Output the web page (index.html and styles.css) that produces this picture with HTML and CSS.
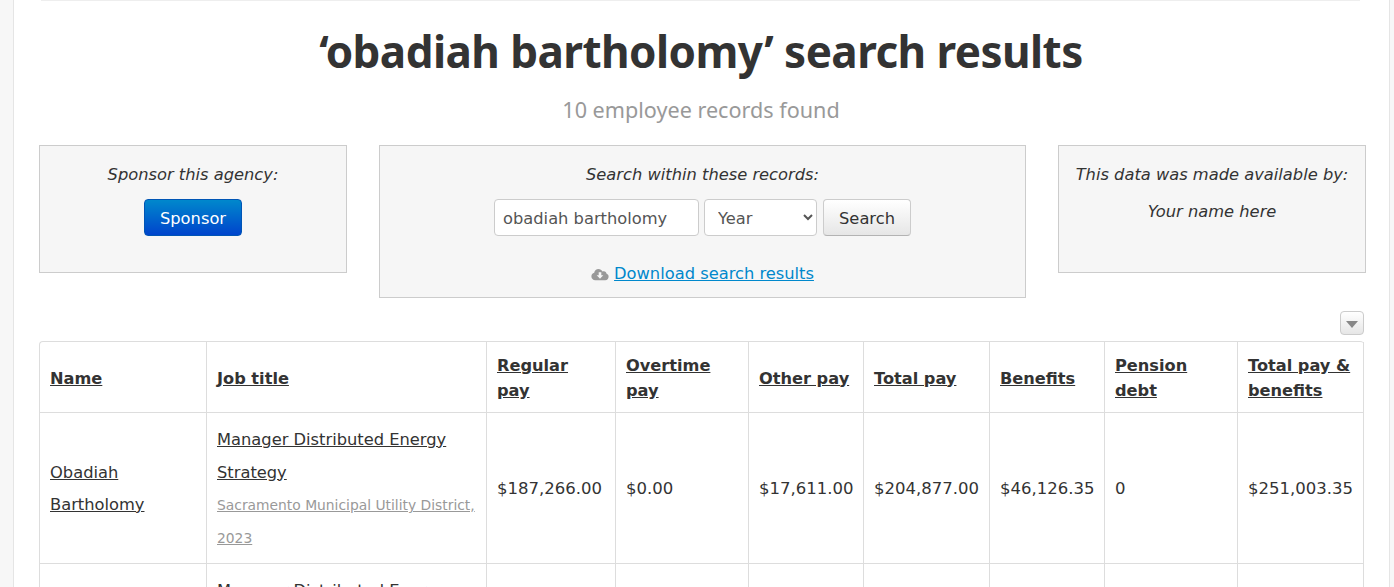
FILE: index.html
```html
<!DOCTYPE html>
<html lang="en">
<head>
    <meta charset="UTF-8">
    <meta name="viewport" content="width=device-width, initial-scale=1.0">
    <title>'obadiah bartholomy' search results</title>
    <link rel="stylesheet" href="styles.css">
</head>
<body>
    <div class="page">
        <div class="top-rule"></div>
        <h1 class="page-title">‘obadiah bartholomy’ search results</h1>
        <p class="page-subtitle">10 employee records found</p>

        <div class="panels">
            <div class="panel panel-side">
                <p class="panel-label">Sponsor this agency:</p>
                <a class="btn btn-primary" href="#">Sponsor</a>
            </div>

            <div class="panel panel-search">
                <p class="panel-label">Search within these records:</p>
                <form class="search-form">
                    <input class="search-input" type="text" value="obadiah bartholomy">
                    <select class="search-select">
                        <option>Year</option>
                    </select>
                    <button class="btn btn-default" type="button">Search</button>
                </form>
                <p class="download">
                    <svg class="download-icon" viewBox="0 2 18 11.7" width="18" height="13">
                        <path fill="#999" d="M4.3 13.5C2 13.5 .4 11.8 .4 9.8c0-1.8 1.2-3.2 2.8-3.6C3.5 3.900 5.400 2.300 7.500 2.300c1.700 0 3.200 1 4 2.500 .4-.2.800-.3 1.300-.3 1.500 0 2.700 1.200 2.800 2.700 1.200.4 2 1.500 2 2.800 0 1.900-1.400 3.500-3.300 3.500z"/>
                        <path fill="#f6f6f6" d="M7.700 5.500h2.600v3h2l-3.300 3.600-3.300-3.600h2z"/>
                    </svg>
                    <a href="#">Download search results</a>
                </p>
            </div>

            <div class="panel panel-side">
                <p class="panel-label">This data was made available by:</p>
                <p class="panel-label panel-name">Your name here</p>
            </div>
        </div>

        <div class="table-tools">
            <button class="tools-toggle" type="button"><span class="caret"></span></button>
        </div>

        <table class="records">
            <thead>
                <tr>
                    <th class="col-name"><a href="#">Name</a></th>
                    <th class="col-job"><a href="#">Job title</a></th>
                    <th class="col-regular"><a href="#">Regular pay</a></th>
                    <th class="col-overtime"><a href="#">Overtime pay</a></th>
                    <th class="col-other"><a href="#">Other pay</a></th>
                    <th class="col-total"><a href="#">Total pay</a></th>
                    <th class="col-benefits"><a href="#">Benefits</a></th>
                    <th class="col-pension"><a href="#">Pension debt</a></th>
                    <th class="col-all"><a href="#">Total pay &amp; benefits</a></th>
                </tr>
            </thead>
            <tbody>
                <tr>
                    <td class="cell-name"><a href="#">Obadiah Bartholomy</a></td>
                    <td>
                        <a href="#">Manager Distributed Energy Strategy</a><br>
                        <a class="agency" href="#">Sacramento Municipal Utility District, 2023</a>
                    </td>
                    <td>$187,266.00</td>
                    <td>$0.00</td>
                    <td>$17,611.00</td>
                    <td>$204,877.00</td>
                    <td>$46,126.35</td>
                    <td>0</td>
                    <td>$251,003.35</td>
                </tr>
                <tr>
                    <td class="cell-name"><a href="#">Obadiah Bartholomy</a></td>
                    <td>
                        <a href="#">Manager Distributed Energy Strategy</a><br>
                        <a class="agency" href="#">Sacramento Municipal Utility District, 2022</a>
                    </td>
                    <td>$180,122.00</td>
                    <td>$0.00</td>
                    <td>$16,204.00</td>
                    <td>$196,326.00</td>
                    <td>$44,310.12</td>
                    <td>0</td>
                    <td>$240,636.12</td>
                </tr>
            </tbody>
        </table>
    </div>
</body>
</html>
```

FILE: styles.css
```css
html, body {
    height: 587px;
    overflow: hidden;
}

body {
    margin: 0;
    background-color: #f7f7f7;
    font-family: "DejaVu Sans", sans-serif;
    font-size: 16.3px;
    color: #333;
}

.page {
    width: 1377px;
    height: 587px;
    margin-left: 13px;
    padding: 0 26px 0 25px;
    box-sizing: border-box;
    background-color: #fff;
    border-left: 1px solid #e5e5e5;
    border-right: 1px solid #e5e5e5;
    overflow: hidden;
}

.top-rule {
    height: 1px;
    margin: 0 3px 0 2px;
    background-color: #eee;
}

/* headings */
.page-title {
    margin: 20px 0 0;
    font-family: "Noto Sans", sans-serif;
    font-size: 44px;
    font-weight: 700;
    line-height: 60px;
    text-align: center;
    letter-spacing: -0.55px;
}

.page-subtitle {
    margin: 14px 0 0;
    font-family: "Noto Sans", sans-serif;
    font-size: 21.6px;
    line-height: 30px;
    text-align: center;
    color: #999;
}

/* panels */
.panels {
    display: flex;
    justify-content: space-between;
    align-items: flex-start;
    margin-top: 20px;
    margin-right: -3px;
}

.panel {
    box-sizing: border-box;
    padding: 18px 10px 0;
    text-align: center;
    background-color: #f6f6f6;
    border: 1px solid #ccc;
}

.panel-side {
    width: 308px;
    height: 128px;
}

.panel-search {
    width: 647px;
    height: 153px;
}

.panel-label {
    margin: 0;
    font-style: italic;
    line-height: 22px;
}

.panel-name {
    margin-top: 15px;
}

.btn {
    display: inline-block;
    box-sizing: border-box;
    height: 37px;
    font-family: inherit;
    font-size: 16.3px;
    line-height: 37px;
    text-decoration: none;
    border-radius: 4px;
}

.panel-side .btn {
    margin-top: 13px;
    width: 98px;
}

.btn-primary {
    color: #fff;
    background-image: linear-gradient(to bottom, #0088cc, #0044cc);
    border: 1px solid #0055b5;
}

.btn-default {
    width: 88px;
    padding: 2px 0 0;
    line-height: 33px;
    color: #333;
    background-image: linear-gradient(to bottom, #fff, #e6e6e6);
    border: 1px solid #ccc;
    border-bottom-color: #b3b3b3;
}

.search-form {
    display: flex;
    justify-content: center;
    gap: 5px;
    margin-top: 13px;
}

.search-form .btn-default {
    margin-left: 1px;
}

.search-input,
.search-select {
    box-sizing: border-box;
    height: 37px;
    font-family: inherit;
    font-size: 16.3px;
    color: #555;
    background-color: #fff;
    border: 1px solid #ccc;
    border-radius: 4px;
}

.search-input {
    width: 205px;
    padding: 2px 8px 0;
}

.search-select {
    width: 113px;
    padding: 2px 0 0 9px;
}

.download {
    display: flex;
    justify-content: center;
    align-items: center;
    gap: 5px;
    margin: 27px 0 0;
    line-height: 22px;
}

.download a {
    color: #0088cc;
}

/* table */
.table-tools {
    display: flex;
    justify-content: flex-end;
    margin-top: 13px;
    margin-right: -1px;
}

.tools-toggle {
    display: flex;
    justify-content: center;
    align-items: center;
    width: 24px;
    height: 24px;
    padding: 0;
    background-image: linear-gradient(to bottom, #fff, #e6e6e6);
    border: 1px solid #ccc;
    border-radius: 4px;
}

.caret {
    width: 0;
    height: 0;
    margin-top: 2px;
    border-top: 7px solid #888;
    border-left: 6px solid transparent;
    border-right: 6px solid transparent;
}

.records {
    width: 1325px;
    margin-top: 6px;
    table-layout: fixed;
    border-collapse: separate;
    border-spacing: 0;
    border-top: 1px solid #ddd;
    border-left: 1px solid #ddd;
    border-radius: 4px 4px 0 0;
}

.records th,
.records td {
    box-sizing: border-box;
    padding: 11px 10px 9px;
    text-align: left;
    vertical-align: middle;
    border-right: 1px solid #ddd;
    border-bottom: 1px solid #ddd;
}

.records th {
    font-size: 16.2px;
    line-height: 25px;
    font-weight: 700;
}

.records td {
    font-size: 16.5px;
    line-height: 32.5px;
}

.records a {
    color: #333;
}

.records td a {
    font-size: 16.3px;
}

.records td .agency {
    font-size: 13.85px;
    color: #999;
}

.col-name { width: 167px; }
.col-job { width: 280px; }
.col-regular { width: 129px; }
.col-overtime { width: 133px; }
.col-other { width: 115px; }
.col-total { width: 126px; }
.col-benefits { width: 115px; }
.col-pension { width: 133px; }
.col-all { width: 126px; }
```
